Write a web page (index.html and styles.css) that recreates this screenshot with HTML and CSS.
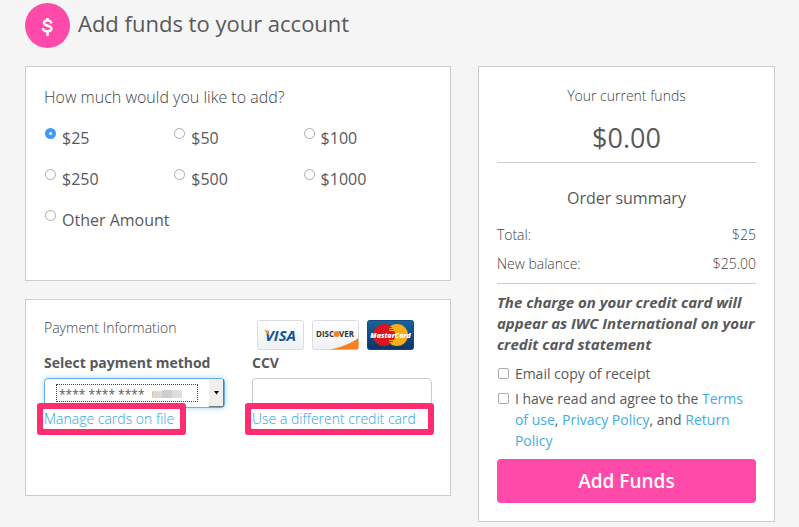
FILE: index.html
```html
<!DOCTYPE html>
<html lang="en">
<head>
<meta charset="utf-8">
<meta name="viewport" content="width=device-width, initial-scale=1">
<title>Add funds to your account</title>
<link rel="stylesheet" href="styles.css">
</head>
<body>
<header class="page-header">
  <svg class="coin" viewBox="0 0 45 45" aria-hidden="true">
    <circle cx="22.500" cy="22.500" r="22.500" fill="#ff4aa9"/>
    <path d="M26 19.300c-.6-1.200-1.800-1.800-3.500-1.800-2.100 0-3.500 1-3.500 2.500 0 3.800 7.400 1.700 7.400 5.600 0 1.800-1.600 2.800-3.900 2.800-2 0-3.500-.7-4.300-2.100M22.500 16.300v1.200M22.500 28.500v3.200" fill="none" stroke="#fff" stroke-width="2.500" stroke-linecap="square"/>
  </svg>
  <h1>Add funds to your account</h1>
</header>
<form class="layout">
  <div class="column">
    <fieldset class="panel amounts">
      <legend class="question">How much would you like to add?</legend>
      <div class="options">
        <label class="option"><input type="radio" name="amount" checked><span>$25</span></label>
        <label class="option"><input type="radio" name="amount"><span>$50</span></label>
        <label class="option"><input type="radio" name="amount"><span>$100</span></label>
        <label class="option"><input type="radio" name="amount"><span>$250</span></label>
        <label class="option"><input type="radio" name="amount"><span>$500</span></label>
        <label class="option"><input type="radio" name="amount"><span>$1000</span></label>
        <label class="option wide"><input type="radio" name="amount"><span>Other Amount</span></label>
      </div>
    </fieldset>
    <section class="panel payment">
      <div class="payment-grid">
        <h2 class="payment-title">Payment Information</h2>
        <div class="brands">
          <svg class="brand" viewBox="0 0 47 30" role="img" aria-label="Visa">
            <defs><linearGradient id="plate" x1="0" y1="0" x2="0" y2="1"><stop offset="0" stop-color="#fff"/><stop offset="1" stop-color="#eef1f4"/></linearGradient></defs>
            <rect x=".5" y=".5" width="46" height="29" rx="2" fill="url(#plate)" stroke="#dadde0"/>
            <text x="23.500" y="21" text-anchor="middle" class="visa">VISA</text>
            <path d="M7 10.200h3.500l2 5.500z" fill="#f0a41f"/>
          </svg>
          <svg class="brand" viewBox="0 0 47 30" role="img" aria-label="Discover">
            <rect x=".5" y=".5" width="46" height="29" rx="2" fill="url(#plate)" stroke="#dadde0"/>
            <path d="M17 29.500C29 27.500 39 23.500 46.500 18v9.500a2 2 0 0 1-2 2z" fill="#f58220"/>
            <text x="4" y="17" class="discover">DISC</text>
            <circle cx="24.700" cy="14" r="2.900" fill="#f58220"/>
            <text x="27" y="17" class="discover">VER</text>
          </svg>
          <svg class="brand" viewBox="0 0 47 30" role="img" aria-label="MasterCard">
            <defs><linearGradient id="navy" x1="0" y1="0" x2="0" y2="1"><stop offset="0" stop-color="#17659f"/><stop offset="1" stop-color="#0b3367"/></linearGradient></defs>
            <rect x=".5" y=".5" width="46" height="29" rx="2" fill="url(#navy)" stroke="#164b7d"/>
            <circle cx="30" cy="15" r="11" fill="#f8ad19"/>
            <circle cx="17" cy="15" r="11" fill="#d9151f"/>
            <path d="M23.500 6.500h3M22.500 8.500h5M22 10.500h5M22 20.500h5M22.500 22.500h5" stroke="#f8ad19"/>
            <text x="23.500" y="18" text-anchor="middle" class="mastercard">MasterCard</text>
          </svg>
        </div>
        <div class="field">
          <label for="method">Select payment method</label>
          <div class="select-box">
            <select id="method" class="control"><option>**** **** ****</option></select>
            <svg class="redaction" viewBox="0 0 31 8" aria-hidden="true"><path d="M0 1h10v7H0z" fill="#ddd8d2"/><path d="M10 0h10v8H10z" fill="#cecece"/><path d="M20 0h10v8H20z" fill="#dedede"/><path d="M0 2v5" stroke="#e8ad55"/></svg>
            <svg class="arrow" viewBox="0 0 15 28" aria-hidden="true"><path d="M0 0h15v28H0z" fill="#efefef"/><path d="M14.500 0v27.500H0" fill="none" stroke="#777"/><path d="M5 12h5l-2.500 3.500z" fill="#000"/></svg>
          </div>
          <a class="marked" href="#">Manage cards on file</a>
        </div>
        <div class="field">
          <label for="ccv">CCV</label>
          <input id="ccv" class="control" type="text">
          <a class="marked marked-wide" href="#">Use a different credit card</a>
        </div>
      </div>
    </section>
  </div>
  <aside class="panel summary">
    <h2 class="funds-label">Your current funds</h2>
    <p class="funds">$0.00</p>
    <h2 class="summary-title">Order summary</h2>
    <dl class="totals">
      <div><dt>Total:</dt><dd>$25</dd></div>
      <div><dt>New balance:</dt><dd>$25.00</dd></div>
    </dl>
    <p class="notice">The charge on your credit card will appear as IWC International on your credit card statement</p>
    <div class="check"><input id="receipt" type="checkbox"><label for="receipt">Email copy of receipt</label></div>
    <div class="check"><input id="agree" type="checkbox"><label for="agree">I have read and agree to the <a href="#">Terms of use</a>, <a href="#">Privacy Policy</a>, and <a href="#">Return Policy</a></label></div>
    <button class="submit" type="button">Add Funds</button>
  </aside>
</form>
</body>
</html>
```

FILE: styles.css
```css
* { box-sizing: border-box; }

body {
  margin: 0;
  padding: 3px 24px 5px 25px;
  background: #f5f5f5;
  color: #58595b;
  font: 14px/21px "Open Sans", "Liberation Sans", sans-serif;
}

h1, h2, p, dl, dd { margin: 0; }
h1, h2 { font-weight: 400; }
a { color: #41aee6; text-decoration: none; }

.page-header {
  display: flex;
  align-items: center;
  gap: 8px;
  margin-bottom: 18px;
}
.coin { width: 45px; height: 45px; }
h1 { font-size: 22px; line-height: 30px; padding-bottom: 5px; }

.layout {
  display: grid;
  grid-template-columns: minmax(0, 43fr) minmax(0, 30fr);
  gap: 27px;
  align-items: start;
}
.column { display: grid; gap: 18px; }
.panel {
  min-width: 0;
  margin: 0;
  padding: 18px;
  border: 1px solid #ccc;
  background: #fff;
}

.question, .payment-title, .funds-label, .totals {
  color: #434446;
  font-weight: 300;
}

.amounts { padding-bottom: 40px; }
.question {
  float: left;
  width: 100%;
  padding: 0;
  font-size: 16px;
  line-height: 24px;
}
.options {
  clear: both;
  display: grid;
  grid-template-columns: repeat(3, 1fr);
  padding-top: 8px;
}
.option {
  display: flex;
  align-items: flex-start;
  gap: 6px;
  padding: 9px 0 8px 1px;
  font-size: 16px;
  line-height: 24px;
}
.wide { grid-column: span 2; }

input[type="radio"], input[type="checkbox"] {
  appearance: none;
  flex: none;
  width: 11px;
  height: 11px;
  margin: 0;
  border: 1px solid #aaa;
  background: #fff;
}
input[type="radio"] { margin-top: 2px; border-radius: 50%; }
input[type="radio"]:checked { border: 4px solid #3b99fc; }
input[type="checkbox"] { border-radius: 2px; }

.payment { padding-bottom: 60px; }
.payment-grid {
  display: grid;
  grid-template-columns: 181px 180px;
  column-gap: 27px;
}
.payment-title { font-size: 14px; line-height: 20px; }
.brands { display: flex; gap: 8px; padding: 2px 0 0 5px; }
.brand { width: 47px; height: 30px; flex: none; }
.visa { font: italic 700 15px "Open Sans", sans-serif; fill: #11559c; }
.discover { font: 700 8px "Open Sans", sans-serif; fill: #333; }
.mastercard { font: italic 800 7px "Open Sans", sans-serif; fill: #fff; }

.field { display: flex; flex-direction: column; align-items: flex-start; }
.field label { font-weight: 700; line-height: 21px; padding: 2px 0 5px; }
.control {
  display: block;
  width: 100%;
  height: 30px;
  border: 1px solid #ccc;
  border-radius: 4px;
  background: #fff;
  color: #58595b;
  font: 12px/20px "Open Sans", sans-serif;
}
.select-box { position: relative; width: 100%; }
select.control {
  appearance: none;
  padding: 3px 14px 0;
  border-color: #66afe9;
  box-shadow: 0 0 6px #a9d5f5;
}
.select-box::after {
  content: "";
  position: absolute;
  inset: 6px 27px 6px 12px;
  border: 1px dotted #444;
  pointer-events: none;
}
.redaction { position: absolute; left: 108px; top: 12px; width: 31px; height: 8px; }
.arrow { position: absolute; right: 1px; top: 1px; width: 15px; height: 28px; pointer-events: none; }
.marked {
  position: relative;
  margin: -5px 0 0 -7px;
  padding: 0 6px 0 1px;
  border: 6px solid #ff2d6f;
  border-radius: 3px;
  background: #fff;
  color: #2ba3e2;
  font-weight: 300;
  line-height: 20px;
  white-space: nowrap;
}
.marked-wide { padding-right: 12px; }

.funds-label { text-align: center; font-size: 14px; }
.funds {
  padding: 14px 0 6px;
  border-bottom: 1px solid #ccc;
  font-size: 27px;
  line-height: 36px;
  text-align: center;
}
.summary-title {
  padding: 23px 0 14px;
  font-size: 16px;
  line-height: 24px;
  text-align: center;
}
.totals { padding-bottom: 9px; border-bottom: 1px solid #ccc; }
.totals div { display: flex; justify-content: space-between; }
.totals div + div { margin-top: 8px; }
.notice {
  padding: 8px 0;
  font-size: 15px;
  font-weight: 700;
  font-style: italic;
}
.check { display: flex; gap: 6px; padding: 0 0 4px 1px; }
.check input { margin-top: 5px; }
.submit {
  display: block;
  width: 100%;
  height: 44px;
  margin-top: 4px;
  border: 0;
  border-radius: 4px;
  background: #ff4aa9;
  color: #fff;
  font: 600 19px/28px "Open Sans", sans-serif;
}
```
